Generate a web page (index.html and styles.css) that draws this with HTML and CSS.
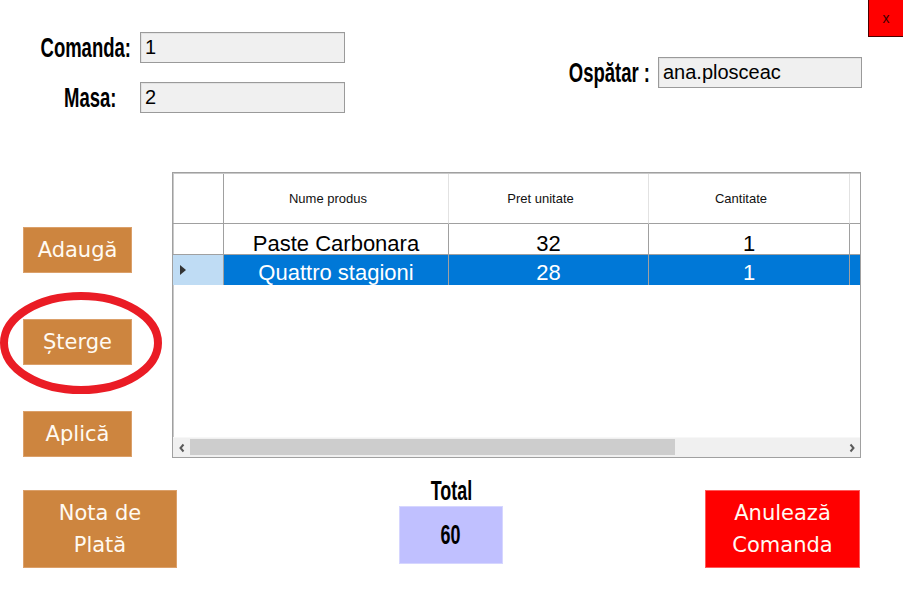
FILE: index.html
```html
<!DOCTYPE html>
<html lang="ro">
<head>
<meta charset="utf-8">
<title>Comanda</title>
<link rel="stylesheet" href="styles.css">
</head>
<body>
<div class="form">
  <header class="top">
    <div class="ids">
      <div class="lbl"><span class="cond">Comanda:</span></div>
      <div class="field">1</div>
      <div class="lbl lbl-masa"><span class="cond">Masa:</span></div>
      <div class="field">2</div>
    </div>
    <div class="waiter">
      <div class="lbl"><span class="cond">Ospătar :</span></div>
      <div class="field field-waiter">ana.plosceac</div>
    </div>
    <button class="close">x</button>
  </header>

  <main class="middle">
    <div class="actions">
      <button class="btn">Adaugă</button>
      <button class="btn">Șterge</button>
      <button class="btn">Aplică</button>
    </div>
    <div class="dgv">
      <div class="dgv-body">
        <div class="dgv-row dgv-head">
          <div class="c rh"></div>
          <div class="c">Nume produs</div>
          <div class="c">Pret unitate</div>
          <div class="c">Cantitate</div>
          <div class="c"></div>
        </div>
        <div class="dgv-row dgv-data">
          <div class="c rh"></div>
          <div class="c">Paste Carbonara</div>
          <div class="c">32</div>
          <div class="c">1</div>
          <div class="c"></div>
        </div>
        <div class="dgv-row dgv-data sel">
          <div class="c rh"><span class="arrow"></span></div>
          <div class="c">Quattro stagioni</div>
          <div class="c">28</div>
          <div class="c">1</div>
          <div class="c"></div>
        </div>
      </div>
      <div class="hscroll">
        <div class="sb-btn">
          <svg width="8" height="10" viewBox="0 0 8 10"><polyline points="5.5,1.5 2.5,5 5.5,8.5" fill="none" stroke="#5a5a5a" stroke-width="2"/></svg>
        </div>
        <div class="sb-track"><div class="sb-thumb"></div></div>
        <div class="sb-btn">
          <svg width="8" height="10" viewBox="0 0 8 10"><polyline points="2.5,1.5 5.5,5 2.5,8.5" fill="none" stroke="#5a5a5a" stroke-width="2"/></svg>
        </div>
      </div>
    </div>
  </main>

  <footer class="bottom">
    <button class="btn btn-big">Nota de<br>Plată</button>
    <div class="total">
      <div class="total-lbl"><span class="cond">Total</span></div>
      <div class="total-box"><span class="cond">60</span></div>
    </div>
    <button class="btn btn-big btn-red">Anulează<br>Comanda</button>
  </footer>

  <svg class="highlight" width="166" height="106" viewBox="0 0 166 106">
    <ellipse cx="81" cy="52" rx="77" ry="47" fill="none" stroke="#ea1c25" stroke-width="8"/>
  </svg>
</div>
</body>
</html>
```

FILE: styles.css
```css
* { box-sizing: border-box; }

html, body {
  margin: 0;
  padding: 0;
  background: #ffffff;
}

.form {
  position: relative;
  width: 903px;
  height: 596px;
  overflow: hidden;
  font-family: "Liberation Sans", Arial, sans-serif;
  color: #000;
}

/* condensed bold labels */
.cond {
  display: inline-block;
  font-family: "Liberation Sans", Arial, sans-serif;
  font-weight: bold;
  font-size: 28px;
  line-height: 28px;
  transform: scaleX(0.64);
  white-space: nowrap;
}

/* ---------- top ---------- */
.top {
  display: flex;
  align-items: flex-start;
  height: 172px;
}

.ids {
  display: grid;
  grid-template-columns: 140px 205px;
  grid-auto-rows: 31px;
  row-gap: 19px;
  padding-top: 32px;
}

.lbl {
  display: flex;
  align-items: center;
  justify-content: flex-end;
  padding-right: 9px;
  height: 31px;
}
.lbl .cond { transform-origin: right center; transform: scaleX(0.66); }
.lbl-masa { padding-right: 24px; }

.field {
  height: 31px;
  background: #f0f0f0;
  border: 1px solid #9a9a9a;
  box-shadow: inset 1px 1px 0 #e3e3e3;
  font-size: 20px;
  line-height: 29px;
  padding-left: 4px;
  white-space: nowrap;
  overflow: hidden;
}

.waiter {
  display: flex;
  align-items: center;
  margin-left: auto;
  margin-top: 57px;
}
.waiter .lbl { padding-right: 8px; }
.field-waiter { width: 204px; }

.close {
  width: 35px;
  height: 37px;
  margin-left: 6px;
  padding: 0;
  background: #ff0000;
  border: 1px solid #4a0000;
  border-top: 0;
  border-right: 0;
  font-family: "Liberation Sans", Arial, sans-serif;
  font-size: 14px;
  color: #3a0000;
}

/* ---------- middle ---------- */
.middle {
  display: flex;
  height: 286px;
}

.actions {
  width: 172px;
  display: flex;
  flex-direction: column;
  align-items: flex-start;
  gap: 46px;
  padding: 55px 0 0 23px;
}

.btn {
  width: 109px;
  height: 46px;
  padding: 0;
  background: #cd853f;
  border: 1px solid #dba06a;
  color: #fffaf2;
  font-family: "Comic Sans MS", "DejaVu Sans", sans-serif;
  font-size: 21px;
  line-height: 32px;
}

.dgv {
  width: 689px;
  height: 286px;
  border: 1px solid #a0a0a0;
  box-shadow: inset 1px 1px 0 #c9c9c9;
  display: flex;
  flex-direction: column;
  background: #fff;
  overflow: hidden;
}

.dgv-body {
  flex: 1;
  overflow: hidden;
  padding: 1px 0 0 0;
}

.dgv-row {
  display: grid;
  grid-template-columns: 51px 225px 200px 201px 100px;
  width: 777px;
}

.c {
  border-right: 1px solid #a0a0a0;
  border-bottom: 1px solid #a0a0a0;
  text-align: center;
  white-space: nowrap;
  overflow: hidden;
}

.dgv-head .c {
  height: 50px;
  line-height: 49px;
  font-size: 13px;
  padding-right: 16px;
  border-right-color: #e2e2e2;
  border-bottom-color: #a0a0a0;
  color: #111;
}
.dgv-head .c.rh { border-right-color: #a0a0a0; }

.dgv-data .c {
  height: 31px;
  line-height: 31px;
  padding-top: 4px;
  font-size: 22px;
}
.dgv-data .c.rh { border-right-color: #a0a0a0; }

.sel .c {
  background: #0078d7;
  color: #fff;
  height: 30px;
  padding-top: 2px;
  border-bottom: 0;
}
.sel .c.rh {
  background: #bfdcf4;
  display: flex;
  align-items: center;
  padding: 0 0 0 7px;
}

.arrow {
  width: 0;
  height: 0;
  border-top: 5px solid transparent;
  border-bottom: 5px solid transparent;
  border-left: 6px solid #333;
}

.hscroll {
  display: flex;
  height: 20px;
  background: #f0f0f0;
  border-top: 1px solid #f7f7f7;
}

.sb-btn {
  width: 17px;
  display: flex;
  align-items: center;
  justify-content: center;
}

.sb-track {
  flex: 1;
  padding: 1px 0 2px 0;
}

.sb-thumb {
  width: 485px;
  height: 100%;
  background: #cdcdcd;
}

/* ---------- bottom ---------- */
.bottom {
  display: flex;
  align-items: flex-start;
  height: 138px;
  padding-left: 23px;
}

.btn-big {
  width: 154px;
  height: 78px;
  margin-top: 32px;
}

.total {
  display: flex;
  flex-direction: column;
  align-items: center;
  width: 104px;
  margin-left: 222px;
  padding-top: 19px;
}

.total-lbl {
  height: 29px;
  line-height: 28px;
}

.total-box {
  width: 104px;
  height: 58px;
  background: #c0c0ff;
  border: 1px solid #d6d6ff;
  display: flex;
  align-items: center;
  justify-content: center;
}

.btn-red {
  width: 155px;
  margin-left: 202px;
  background: #ff0000;
  border-color: #ff5a5a;
}

/* annotation overlay */
.highlight {
  position: absolute;
  left: 0;
  top: 291px;
}
```
